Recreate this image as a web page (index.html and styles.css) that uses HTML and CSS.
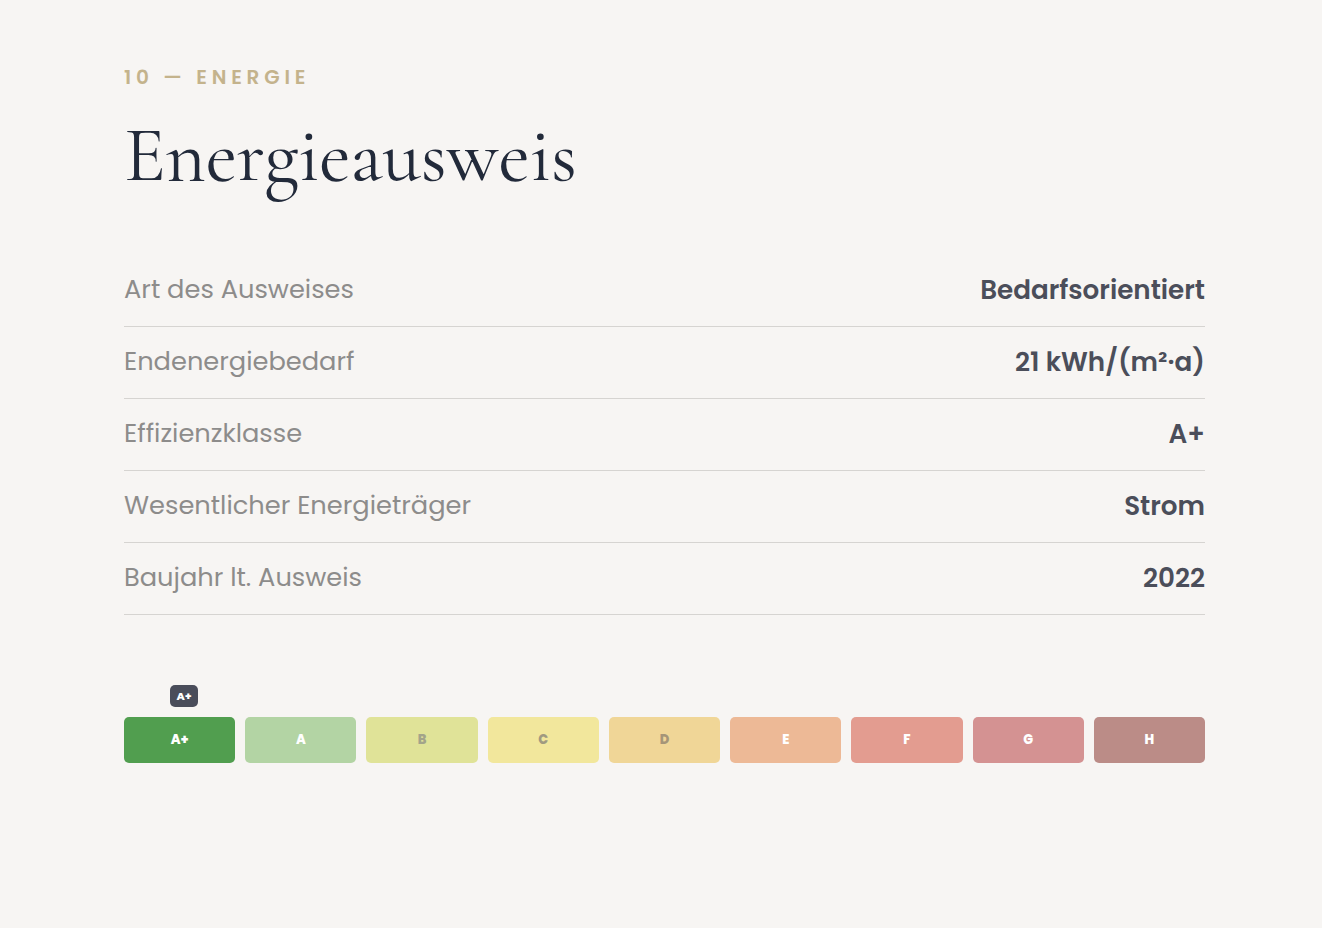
FILE: index.html
```html
<!DOCTYPE html>
<html lang="de">
<head>
<meta charset="utf-8">
<title>Energieausweis</title>
<link rel="stylesheet" href="styles.css">
</head>
<body>
<section class="section">
  <div class="eyebrow">10 — Energie</div>
  <h2 class="title">Energieausweis</h2>
  <dl class="facts">
    <div class="row"><dt>Art des Ausweises</dt><dd>Bedarfsorientiert</dd></div>
    <div class="row"><dt>Endenergiebedarf</dt><dd>21 kWh/(m²·a)</dd></div>
    <div class="row"><dt>Effizienzklasse</dt><dd>A+</dd></div>
    <div class="row"><dt>Wesentlicher Energieträger</dt><dd>Strom</dd></div>
    <div class="row"><dt>Baujahr lt. Ausweis</dt><dd>2022</dd></div>
  </dl>
  <div class="scale">
    <div class="cell c-ap"><span class="badge">A+</span>A+</div>
    <div class="cell c-a">A</div>
    <div class="cell c-b">B</div>
    <div class="cell c-c">C</div>
    <div class="cell c-d">D</div>
    <div class="cell c-e">E</div>
    <div class="cell c-f">F</div>
    <div class="cell c-g">G</div>
    <div class="cell c-h">H</div>
  </div>
</section>
</body>
</html>
```
FILE: styles.css
```css
* { box-sizing: border-box; }
html, body { margin: 0; padding: 0; }
body {
  background: #f7f5f3;
  font-family: "Poppins", "Inter", "Liberation Sans", sans-serif;
  color: #4a4d58;
}
.section {
  width: 1081px;
  margin-left: 124px;
  padding-top: 64px;
}
.eyebrow {
  font-size: 20px;
  font-weight: 600;
  letter-spacing: 0.24em;
  text-transform: uppercase;
  color: #c4b38c;
  line-height: 26px;
}
.title {
  margin: 20px 0 0;
  font-family: "Cormorant Garamond", "Liberation Serif", serif;
  font-weight: 400;
  font-size: 78px;
  line-height: 90px;
  color: #222a3a;
  letter-spacing: -0.4px;
}
.facts {
  margin: 55px 0 0;
}
.row {
  display: flex;
  justify-content: space-between;
  align-items: center;
  height: 72px;
  padding-bottom: 2px;
  border-bottom: 1px solid #d6d4d1;
}
.row dt {
  font-size: 25.7px;
  font-weight: 400;
  color: #8d8c8b;
}
.row dd {
  margin: 0;
  font-size: 26.2px;
  font-weight: 600;
  color: #4b4e5a;
}
.scale {
  display: grid;
  grid-template-columns: repeat(9, 1fr);
  gap: 10px;
  margin-top: 102px;
}
.cell {
  position: relative;
  height: 46px;
  border-radius: 5px;
  display: flex;
  align-items: center;
  justify-content: center;
  font-size: 13px;
  font-weight: 800;
  color: #fff;
}
.badge {
  position: absolute;
  left: 46px;
  top: -32px;
  height: 22px;
  width: 28px;
  border-radius: 5px;
  background: #4a4d5a;
  color: #fff;
  font-size: 11px;
  font-weight: 800;
  display: flex;
  align-items: center;
  justify-content: center;
}
.c-ap { background: #519e4f; }
.c-a { background: #b3d4a4; }
.c-b { background: #e0e398; color: #a3a48a; }
.c-c { background: #f2e79c; color: #a09a80; }
.c-d { background: #f0d697; color: #a59578; }
.c-e { background: #edb996; }
.c-f { background: #e39c90; }
.c-g { background: #d49292; }
.c-h { background: #bb8c87; }
```
